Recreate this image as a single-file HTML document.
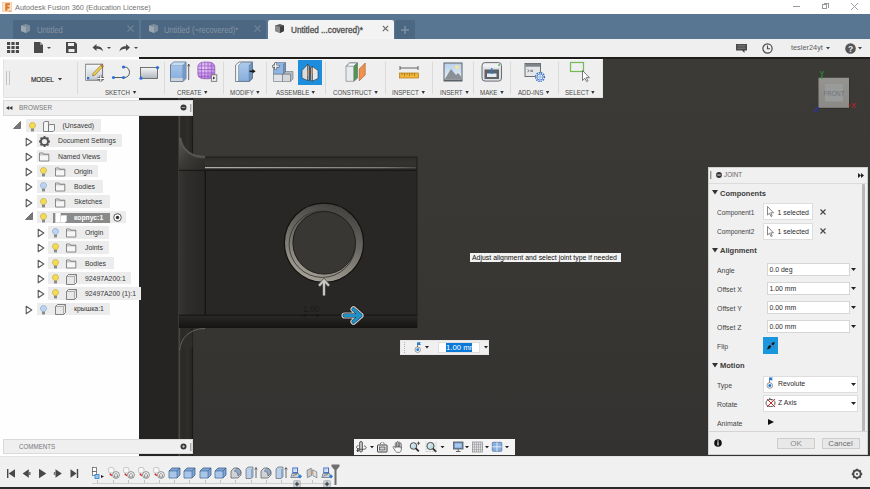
<!DOCTYPE html>
<html><head><meta charset="utf-8">
<style>
*{margin:0;padding:0;box-sizing:border-box}
html,body{width:870px;height:489px;overflow:hidden;background:#3c3a37;font-family:"Liberation Sans",sans-serif;}
.a{position:absolute}
.t{position:absolute;white-space:nowrap;line-height:1}
#title{left:0;top:0;width:870px;height:14px;background:#fff}
#tabs{left:0;top:14px;width:870px;height:25px;background:#587592}
#qat{left:0;top:39px;width:870px;height:18px;background:#efefef}
#vp{left:139px;top:57px;width:731px;height:399px;background:linear-gradient(#3c3a37,#393734 50%,#343230);border-top:2px solid #201e1b}
#leftp{left:0;top:57px;width:139px;height:399px;background:#fefefe}
#ribbon{left:3px;top:59px;width:600px;height:38.5px;background:#efefef;border:1px solid #e2e2e2;border-top-color:#f8f8f8}
#browserh{left:2.5px;top:100px;width:190px;height:16px;background:#efefef;border:1px solid #dadada}
#comments{left:2.5px;top:439px;width:190px;height:15px;background:#efefef;border:1px solid #dadada}
#timeline{left:0;top:456px;width:870px;height:31px;background:#f0f0f0;border-top:1px solid #e4e4e4}
#tlbottom{left:0;top:487px;width:870px;height:2px;background:#2a2a2a}
#dialog{left:708px;top:167px;width:160px;height:288px;background:#f0f0f0;border:1px solid #cfcfcf}
.rl{font-size:7.3px;color:#4a4a4a;transform:scaleX(0.845);transform-origin:0 0}
.rl::after{content:"";display:inline-block;margin-left:3px;border-left:2.3px solid transparent;border-right:2.3px solid transparent;border-top:3px solid #333;vertical-align:1.5px}
.dh{font-size:7.5px;font-weight:bold;color:#3a3a3a;margin-top:0.6px}
.dl{font-size:7px;color:#444;transform:scaleX(0.99);transform-origin:0 0}
.dt{font-size:6.9px;color:#2a2a2a;margin-top:0.8px}
.lbl{font-size:6.6px;color:#555}
.row{position:absolute;height:12.5px;background:#ececec}
.rt{position:absolute;font-size:6.85px;color:#363636;white-space:nowrap;line-height:12px}
</style></head><body>

<!-- TITLE -->
<div id="title" class="a"></div>
<svg class="a" style="left:1.5px;top:2px" width="10" height="10" viewBox="0 0 10 10"><rect x="0" y="0" width="10" height="10" fill="#fbe3cc"/><rect x="0.6" y="0.6" width="8.8" height="8.8" fill="none" stroke="#f6c9a0" stroke-width="0.6"/><path d="M3.3 1.2H8V3.3H5.4V4.6H7.6V6.6H5.4V8.8H3.3Z" fill="#dc7426"/><rect x="6.5" y="8.5" width="2.8" height="1.2" fill="#f0a060"/></svg>
<div class="t" style="left:15px;top:4px;font-size:7.8px;color:#727272;transform:scaleX(0.94);transform-origin:0 0">Autodesk Fusion 360 (Education License)</div>
<div class="a" style="left:793px;top:6px;width:7px;height:1px;background:#999"></div>
<div class="a" style="left:822px;top:4px;width:5px;height:5px;border:1px solid #999"></div>
<div class="a" style="left:823.5px;top:2.5px;width:5px;height:5px;border-top:1px solid #999;border-right:1px solid #999"></div>
<svg class="a" style="left:850px;top:2px" width="9" height="9" viewBox="0 0 9 9"><path d="M1 1L8 8M8 1L1 8" stroke="#999" stroke-width="0.9"/></svg>
<!-- TABS -->
<div id="tabs" class="a"></div>
<div class="a" style="left:13px;top:20px;width:126px;height:19px;background:#4c6782;border-radius:2px 2px 0 0"></div>
<div class="a" style="left:141px;top:20px;width:125px;height:19px;background:#4c6782;border-radius:2px 2px 0 0"></div>
<div class="a" style="left:268px;top:20px;width:126px;height:19px;background:#f3f3f3;border-radius:2px 2px 0 0"></div>
<div class="a" style="left:395px;top:20px;width:20px;height:19px;background:#4c6782;border-radius:2px 2px 0 0"></div>
<svg class="a" style="left:20px;top:23px" width="11" height="11" viewBox="0 0 11 11"><path d="M1 2.5L6 1L10 2.5V8L6 10L1 8Z" fill="#7f8e9c"/><path d="M1 2.5L6 4V10L1 8Z" fill="#9aa6b1"/></svg>
<div class="t" style="left:37px;top:25.8px;font-size:8.4px;color:#8594a3;transform:scaleX(0.91);transform-origin:0 0">Untitled</div>
<svg class="a" style="left:127px;top:25px" width="7" height="7" viewBox="0 0 7 7"><path d="M0.5 0.5L6.5 6.5M6.5 0.5L0.5 6.5" stroke="#6f8296" stroke-width="1.1"/></svg>
<svg class="a" style="left:148px;top:23px" width="11" height="11" viewBox="0 0 11 11"><path d="M1 2.5L6 1L10 2.5V8L6 10L1 8Z" fill="#7f8e9c"/><path d="M1 2.5L6 4V10L1 8Z" fill="#9aa6b1"/></svg>
<div class="t" style="left:164px;top:25.8px;font-size:8.4px;color:#8594a3;transform:scaleX(0.91);transform-origin:0 0">Untitled (~recovered)*</div>
<svg class="a" style="left:254px;top:25px" width="7" height="7" viewBox="0 0 7 7"><path d="M0.5 0.5L6.5 6.5M6.5 0.5L0.5 6.5" stroke="#6f8296" stroke-width="1.1"/></svg>
<svg class="a" style="left:274px;top:23px" width="11" height="11" viewBox="0 0 11 11"><path d="M1 2.5L6 1L10 2.5V8L6 10L1 8Z" fill="#5a5a5a"/><path d="M1 2.5L6 4V10L1 8Z" fill="#8c8c8c"/><path d="M6 4L10 2.5V8L6 10Z" fill="#3e3e3e"/></svg>
<div class="t" style="left:291px;top:27px;font-size:8.2px;color:#4e4e4e;-webkit-text-stroke:0.3px #4e4e4e">Untitled ...covered)*</div>
<svg class="a" style="left:382px;top:25px" width="7" height="7" viewBox="0 0 7 7"><path d="M0.8 0.8L6.2 6.2M6.2 0.8L0.8 6.2" stroke="#6a6a6a" stroke-width="1.2"/></svg>
<svg class="a" style="left:400px;top:25px" width="10" height="10" viewBox="0 0 10 10"><path d="M5 1V9M1 5H9" stroke="#7f93a7" stroke-width="1.4"/></svg>
<!-- QAT -->
<div id="qat" class="a"></div>
<svg class="a" style="left:7px;top:42px" width="12" height="11" viewBox="0 0 12 11"><g fill="#4a4a4a"><rect x="0" y="0" width="3.2" height="3" /><rect x="4.4" y="0" width="3.2" height="3"/><rect x="8.8" y="0" width="3.2" height="3"/><rect x="0" y="4" width="3.2" height="3" /><rect x="4.4" y="4" width="3.2" height="3"/><rect x="8.8" y="4" width="3.2" height="3"/><rect x="0" y="8" width="3.2" height="3" /><rect x="4.4" y="8" width="3.2" height="3"/><rect x="8.8" y="8" width="3.2" height="3"/></g></svg>
<svg class="a" style="left:34px;top:42px" width="18" height="11" viewBox="0 0 18 11"><path d="M0 0H6L9 3V11H0Z" fill="#4a4a4a"/><path d="M6 0V3H9" fill="#9a9a9a"/><path d="M13 5H17L15 7Z" fill="#4a4a4a"/></svg>
<svg class="a" style="left:66px;top:42px" width="11" height="11" viewBox="0 0 11 11"><path d="M0 0H9L11 2V11H0Z" fill="#4a4a4a"/><rect x="2" y="1" width="6" height="3" fill="#efefef"/><rect x="2.5" y="7" width="6" height="3" fill="#efefef"/></svg>
<svg class="a" style="left:92px;top:43px" width="20" height="10" viewBox="0 0 20 10"><path d="M4.5 1L0.5 4.5L4.5 8V5.8C7.5 5.6 9.5 6.5 11 8.5C10.5 5 8.5 3.2 4.5 3.2Z" fill="#4a4a4a"/><path d="M15 4H19L17 6Z" fill="#4a4a4a"/></svg>
<svg class="a" style="left:119px;top:43px" width="20" height="10" viewBox="0 0 20 10"><path d="M7 1L11 4.5L7 8V5.8C4 5.6 2 6.5 0.5 8.5C1 5 3 3.2 7 3.2Z" fill="#4a4a4a"/><path d="M15 4H19L17 6Z" fill="#4a4a4a"/></svg>
<svg class="a" style="left:736px;top:44px" width="11" height="9" viewBox="0 0 11 9"><path d="M0 0H11V6.5H8.5V9L6 6.5H0Z" fill="#4a4a4a"/><path d="M1.5 1.5H9.5M1.5 3H9.5M1.5 4.5H9.5" stroke="#888" stroke-width="0.6"/></svg>
<svg class="a" style="left:762px;top:43px" width="11" height="11" viewBox="0 0 11 11"><circle cx="5.5" cy="5.5" r="4.6" fill="none" stroke="#4a4a4a" stroke-width="1.2"/><path d="M5.5 2.6V5.8H8" fill="none" stroke="#4a4a4a" stroke-width="1.1"/></svg>
<div class="t" style="left:791px;top:44px;font-size:7.35px;color:#606060">tesler24yt</div>
<svg class="a" style="left:826px;top:47px" width="4" height="3" viewBox="0 0 4 3"><path d="M0 0H4L2 2.5Z" fill="#444"/></svg>
<svg class="a" style="left:845px;top:43px" width="11" height="11" viewBox="0 0 11 11"><circle cx="5.5" cy="5.5" r="5.3" fill="#555"/><text x="5.5" y="8.6" font-family="Liberation Sans" font-weight="bold" font-size="8.5" fill="#efefef" text-anchor="middle">?</text></svg>
<svg class="a" style="left:858px;top:47px" width="4" height="3" viewBox="0 0 4 3"><path d="M0 0H4L2 2.5Z" fill="#444"/></svg>

<div id="vp" class="a"></div>
<!-- MODEL -->
<svg class="a" style="left:139px;top:59px" width="300" height="397" viewBox="139 59 300 397">
<defs>
<linearGradient id="tube2" x1="0" y1="0" x2="1" y2="0"><stop offset="0" stop-color="#363532"/><stop offset="0.3" stop-color="#2e2d2b"/><stop offset="1" stop-color="#282725"/></linearGradient>
<linearGradient id="tube" x1="0" y1="0" x2="1" y2="0"><stop offset="0" stop-color="#32312e"/><stop offset="0.3" stop-color="#2a2927"/><stop offset="0.65" stop-color="#2f2e2b"/><stop offset="1" stop-color="#252422"/></linearGradient>
<linearGradient id="topband" x1="0" y1="0" x2="0" y2="1"><stop offset="0" stop-color="#2e2d2a"/><stop offset="0.5" stop-color="#34332f"/><stop offset="1" stop-color="#2a2927"/></linearGradient>
<linearGradient id="botband" x1="0" y1="0" x2="0" y2="1"><stop offset="0" stop-color="#2b2a28"/><stop offset="0.6" stop-color="#1d1c1a"/><stop offset="1" stop-color="#151412"/></linearGradient>
<linearGradient id="fil1" x1="0" y1="0" x2="1" y2="1"><stop offset="0" stop-color="#5a5954"/><stop offset="0.5" stop-color="#3a3936"/><stop offset="1" stop-color="#2a2927"/></linearGradient>
<linearGradient id="hl" gradientUnits="userSpaceOnUse" x1="205" y1="0" x2="417" y2="0"><stop offset="0" stop-color="#b0b0ac"/><stop offset="0.85" stop-color="#7a7a76"/><stop offset="1" stop-color="#4a4a46"/></linearGradient>
<linearGradient id="ring" x1="0.3" y1="1" x2="0.65" y2="0"><stop offset="0" stop-color="#a29e94"/><stop offset="0.35" stop-color="#807d76"/><stop offset="0.7" stop-color="#5e5c57"/><stop offset="1" stop-color="#464542"/></linearGradient>
</defs>
<rect x="139" y="59" width="40" height="397" fill="#252422"/>
<rect x="179" y="59" width="13.5" height="397" fill="url(#tube)"/>
<path d="M179.1 59V456" stroke="#62615c" stroke-width="0.8"/>
<path d="M192.6 59V157M192.6 328V456" stroke="#1a1917" stroke-width="1"/>
<!-- top fillet -->
<path d="M179 137C181 150 190.5 157 205 157V170H179Z" fill="url(#fil1)"/>
<!-- body -->
<rect x="205" y="157" width="212" height="13" fill="url(#topband)"/>
<rect x="179" y="170" width="238" height="158" fill="#282725"/>
<rect x="179" y="170" width="26" height="145" fill="url(#tube2)"/>
<path d="M205 157H417V328" fill="none" stroke="#1c1b19" stroke-width="0.8"/>
<path d="M205 167.6H416" stroke="url(#hl)" stroke-width="1.3"/>
<path d="M179 170.3H417" stroke="#161513" stroke-width="1"/>
<path d="M205.3 170V328" stroke="#151412" stroke-width="1.3"/>
<rect x="179" y="315" width="238" height="13" fill="url(#botband)"/>
<path d="M179 315.2H417" stroke="#141311" stroke-width="1"/>
<!-- bottom fillet -->
<path d="M179 348C181 336 190.5 328 205 328H192.5V348Z" fill="#2e2d2a"/>
<path d="M179.5 350C181 337 190.5 328.5 205 328.5" fill="none" stroke="#6a6964" stroke-width="0.9"/>
<path d="M180.5 138C182 149.5 191 157.5 205 157.5" fill="none" stroke="#55544f" stroke-width="2.2" opacity="0.8"/><path d="M179.5 137C181 149 190.5 156.5 205 156.5" fill="none" stroke="#65645f" stroke-width="0.8"/><path d="M192.5 59V137" stroke="#1e1d1b" stroke-width="1"/>
<!-- ring -->
<circle cx="324" cy="242.8" r="35.4" fill="none" stroke="url(#ring)" stroke-width="8.2"/>
<circle cx="324" cy="242.8" r="39.6" fill="none" stroke="#131211" stroke-width="1.2"/>
<circle cx="322.3" cy="244.2" r="33.2" fill="none" stroke="#2e2d2a" stroke-width="0.8"/>
<circle cx="324.2" cy="242.9" r="31.3" fill="#393734" stroke="#1e1d1b" stroke-width="0.8"/>
<!-- arrow up -->
<path d="M324 295.5V281M319 285.8L324 280.3L329 285.8" fill="none" stroke="#4a4a48" stroke-width="3.4"/>
<path d="M324 295.5V281M319 285.8L324 280.3L329 285.8" fill="none" stroke="#c6c6c4" stroke-width="2.1"/>
<!-- dimension -->
<text x="303" y="311.8" font-family="Liberation Sans" font-size="9.4" fill="#1a1a19" transform="translate(303 0) scale(0.88 1) translate(-303 0)">1.00</text>
<path d="M302 315.4L305.5 314.2V316.6ZM320 315.4L316.5 314.2V316.6Z" fill="#111"/>
<!-- blue arrow -->
<g fill="none" stroke-linecap="round" stroke-linejoin="round">
<path d="M344.5 315.5H360.5M353.5 309.3L360.5 315.5L353.5 321.7" stroke="#1c1c1c" stroke-width="7.6"/>
<path d="M344.5 315.5H360.5M353.5 309.3L360.5 315.5L353.5 321.7" stroke="#c6cacd" stroke-width="6.2"/>
<path d="M344.5 315.5H360.5M353.5 309.3L360.5 315.5L353.5 321.7" stroke="#20232a" stroke-width="3.8"/>
<path d="M344.5 315.5H360.5M353.5 309.3L360.5 315.5L353.5 321.7" stroke="#1e90c8" stroke-width="3.1"/>
</g>
</svg>
<div id="leftp" class="a"></div>
<div id="ribbon" class="a"></div>
<div class="a" style="left:6px;top:71px;width:1px;height:14px;background:#c4c4c4"></div>
<div class="a" style="left:9px;top:71px;width:1px;height:14px;background:#c4c4c4"></div>
<div class="t" style="left:30.8px;top:75.6px;font-size:7.4px;color:#333;-webkit-text-stroke:0.2px #333;transform:scaleX(0.87);transform-origin:0 0">MODEL</div>
<svg class="a" style="left:58px;top:77.5px" width="4" height="3" viewBox="0 0 4 3"><path d="M0 0H4L2 2.5Z" fill="#333"/></svg>
<div class="a" style="left:77px;top:62px;width:1px;height:32px;background:#dadada"></div>
<div class="a" style="left:164px;top:62px;width:1px;height:32px;background:#dadada"></div>
<div class="a" style="left:223px;top:62px;width:1px;height:32px;background:#dadada"></div>
<div class="a" style="left:266px;top:62px;width:1px;height:32px;background:#dadada"></div>
<div class="a" style="left:325px;top:62px;width:1px;height:32px;background:#dadada"></div>
<div class="a" style="left:385px;top:62px;width:1px;height:32px;background:#dadada"></div>
<div class="a" style="left:432px;top:62px;width:1px;height:32px;background:#dadada"></div>
<div class="a" style="left:473px;top:62px;width:1px;height:32px;background:#dadada"></div>
<div class="a" style="left:510px;top:62px;width:1px;height:32px;background:#dadada"></div>
<div class="a" style="left:558px;top:62px;width:1px;height:32px;background:#dadada"></div>
<div class="t rl" style="left:105px;top:89px">SKETCH</div>
<div class="t rl" style="left:177px;top:89px">CREATE</div>
<div class="t rl" style="left:230px;top:89px">MODIFY</div>
<div class="t rl" style="left:276px;top:89px">ASSEMBLE</div>
<div class="t rl" style="left:333px;top:89px">CONSTRUCT</div>
<div class="t rl" style="left:392px;top:89px">INSPECT</div>
<div class="t rl" style="left:440px;top:89px">INSERT</div>
<div class="t rl" style="left:480px;top:89px">MAKE</div>
<div class="t rl" style="left:518px;top:89px">ADD-INS</div>
<div class="t rl" style="left:565px;top:89px">SELECT</div>
<!-- sketch icon -->
<svg class="a" style="left:84px;top:62px" width="22" height="21" viewBox="84 62 22 21"><defs><linearGradient id="gsk" x1="0" y1="0" x2="0" y2="1"><stop offset="0" stop-color="#f8fafc"/><stop offset="1" stop-color="#c4cad2"/></linearGradient></defs><rect x="85.8" y="64.2" width="16.8" height="16" fill="url(#gsk)" stroke="#6a6a6a" stroke-width="0.9"/><path d="M86.5 65V80" stroke="#fff" stroke-width="0.6"/><rect x="87" y="77" width="2.2" height="2.2" fill="#2b6fd6"/><path d="M93 73.5L100.8 65.3L102.6 67L94.8 75.2L92.6 75.8Z" fill="#f4cf48" stroke="#6f5a20" stroke-width="0.55"/><path d="M100.8 65.3L101.8 64.3L103.6 66L102.6 67Z" fill="#e07a50" stroke="#6f5a20" stroke-width="0.5"/><path d="M97.5 78.5H104M100.8 75.3V81.7" stroke="#555" stroke-width="2.4"/><path d="M97.5 78.5H104M100.8 75.3V81.7" stroke="#fff" stroke-width="1.2"/></svg>
<svg class="a" style="left:110px;top:64px" width="22" height="16" viewBox="110 64 22 16"><path d="M113.5 77.5H123.5M123.5 67H124.5C127.5 67 129.5 69.3 129.5 72.2C129.5 75.2 127.5 77.5 124.5 77.5H123.5" fill="none" stroke="#5a5a5a" stroke-width="1"/><circle cx="113.5" cy="77.5" r="1.6" fill="#2b6fd6"/><circle cx="123.5" cy="77.5" r="1.6" fill="#2b6fd6"/><circle cx="123.5" cy="67" r="1.6" fill="#2b6fd6"/></svg>
<svg class="a" style="left:138px;top:64px" width="22" height="17" viewBox="138 64 22 17"><defs><linearGradient id="grc" x1="0" y1="0" x2="0" y2="1"><stop offset="0" stop-color="#f4f6f8"/><stop offset="1" stop-color="#b0b6be"/></linearGradient></defs><rect x="140.5" y="67.5" width="17" height="11" fill="url(#grc)" stroke="#666" stroke-width="0.9"/><circle cx="141" cy="78.2" r="1.6" fill="#2b6fd6"/><circle cx="157.5" cy="67.6" r="1.6" fill="#2b6fd6"/></svg>
<!-- create -->
<svg class="a" style="left:168px;top:60px" width="24" height="24" viewBox="168 60 24 24"><defs><linearGradient id="gbx" x1="0" y1="0" x2="0" y2="1"><stop offset="0" stop-color="#aac8ec"/><stop offset="1" stop-color="#84acdc"/></linearGradient></defs><path d="M170.5 65L173.5 62H186V78.5L183 81.5H170.5Z" fill="url(#gbx)" stroke="#5b6a7a" stroke-width="0.8"/><path d="M170.5 65H183L186 62M183 65V81.5" fill="none" stroke="#5b6a7a" stroke-width="0.6"/><path d="M183.3 65.3L185.7 62.6V78.3L183.3 81.1Z" fill="#6f98cc"/><path d="M171 65.3H182.6L185.3 62.5H173.7Z" fill="#c4dcf4"/><rect x="170.9" y="78" width="11.8" height="3.1" fill="#cdd2da"/><path d="M188.7 80V64.5M187.6 66.3L188.7 64L189.8 66.3" stroke="#444" stroke-width="0.8" fill="none"/></svg>
<svg class="a" style="left:197px;top:61px" width="21" height="22" viewBox="197 61 21 22"><defs><radialGradient id="gpp" cx="0.4" cy="0.35" r="0.8"><stop offset="0" stop-color="#eed6fa"/><stop offset="1" stop-color="#b070dc"/></radialGradient></defs><path d="M197.8 68C197.8 63.5 200 62 206.3 62C212.6 62 214.8 63.5 214.8 68V73C214.8 77.5 212.6 78.8 206.3 78.8C200 78.8 197.8 77.5 197.8 73Z" fill="url(#gpp)" stroke="#7a4aa0" stroke-width="0.6"/><g stroke="#8c48c0" stroke-width="0.6" fill="none"><path d="M198 66H214.6M198 69.5H214.6M198 73H214.6M198 76.3H214.6"/><path d="M201.5 62.3V78.6M204.8 62V78.8M208 62V78.8M211.3 62.3V78.6"/></g><rect x="211.3" y="74.8" width="5.5" height="6.5" fill="#eee" stroke="#666" stroke-width="0.8"/><path d="M213 76.5L215.3 78L213 79.5Z" fill="#333"/></svg>
<!-- modify -->
<svg class="a" style="left:234px;top:60px" width="23" height="24" viewBox="234 60 23 24"><defs><linearGradient id="gmd" x1="0" y1="0" x2="0" y2="1"><stop offset="0" stop-color="#aecbec"/><stop offset="1" stop-color="#86aedc"/></linearGradient></defs><path d="M235.6 65L239 62H252.5V78.5L249.3 81.5H235.6Z" fill="#f4f6f8" stroke="#5b6a7a" stroke-width="0.8"/><path d="M238.6 65.2L241.6 62.3H252.3V78.3L249.2 81.3H238.6Z" fill="url(#gmd)" stroke="#5b6a7a" stroke-width="0.5"/><path d="M249.2 65.2L252.3 62.3V78.3L249.2 81.3Z" fill="#6d96ca" stroke="#5b6a7a" stroke-width="0.5"/><path d="M249.5 71.3H253" stroke="#1a1a1a" stroke-width="1.6"/><path d="M252.5 69L255.6 71.3L252.5 73.6Z" fill="#1a1a1a"/></svg>
<!-- assemble -->
<svg class="a" style="left:270px;top:60px" width="25" height="24" viewBox="270 60 25 24"><g stroke="#6a737c" stroke-width="0.6"><path d="M273.5 74H282.5V81.5H273.5Z" fill="#dfe2e6"/><path d="M282.5 74H290.5V81.5H282.5Z" fill="#d4d8dc"/><path d="M282.5 74L285 71.5H293V79L290.5 81.5V74Z" fill="#b4bac2"/><path d="M273.5 64.5L275.5 62.5H285.5V71.5L283.5 74H273.5Z" fill="#8db4e4"/><path d="M283.5 64.5L285.5 62.5V71.5L283.5 74Z" fill="#6d94c4"/></g><path d="M272 66.2H279.5M275.75 62.5V70" stroke="#555" stroke-width="2.6"/><path d="M272.5 66.2H279M275.75 63V69.5" stroke="#fff" stroke-width="1.3"/></svg>
<div class="a" style="left:298px;top:60px;width:24px;height:25px;background:#1e8ddb"></div>
<svg class="a" style="left:298px;top:60px" width="24" height="25" viewBox="298 60 24 25"><g stroke="#2a3440" stroke-width="0.6"><path d="M302 70.5L307.5 64.5L309.5 66V80L307.5 80.5L302 78Z" fill="#d9dde2"/><path d="M307.5 64.5L309.5 66V80L307.5 80.5Z" fill="#9aa2ac"/><path d="M318 70.5L312.5 66.5L310.5 68V80.5L312.5 81L318 78.5Z" fill="#e6e9ec"/><path d="M312.5 66.5L310.5 68V80.5L312.5 81Z" fill="#a8b0b8"/></g><path d="M308 71V76M312 68.5V73.5" stroke="#f08a30" stroke-width="1"/></svg>
<!-- construct -->
<svg class="a" style="left:344px;top:61px" width="23" height="22" viewBox="344 61 23 22"><g stroke="#6a737c" stroke-width="0.6"><path d="M346 66L349.5 62.8H357.5V78L354 81.3H346Z" fill="#e8eaec"/><path d="M346.4 66.2H353.8L357.2 63H349.6Z" fill="#f6f7f8"/><path d="M353.8 66.2L357.3 63V78L353.8 81.1Z" fill="#4c9a48"/></g><path d="M359.2 80.8V69L365.2 63V75Z" fill="#f0924e" stroke="#a05a28" stroke-width="0.6"/></svg>
<!-- inspect -->
<svg class="a" style="left:399px;top:66px" width="20" height="13" viewBox="0 0 20 13"><path d="M1 2H19M1 0V4M19 0V4" stroke="#555" stroke-width="0.9"/><rect x="0.5" y="7" width="19" height="5" fill="#f1b53c" stroke="#b07b12" stroke-width="0.7"/><path d="M3 7V9M5.5 7V10M8 7V9M10.5 7V10M13 7V9M15.5 7V10" stroke="#8a5c10" stroke-width="0.6"/></svg>
<!-- insert -->
<svg class="a" style="left:443px;top:62px" width="20" height="20" viewBox="0 0 20 20"><defs><linearGradient id="gin" x1="0" y1="0" x2="0" y2="1"><stop offset="0" stop-color="#b9d2ea"/><stop offset="1" stop-color="#e8eef4"/></linearGradient></defs><rect x="0.5" y="0.5" width="19" height="19" fill="#5a6068"/><rect x="1.5" y="1.5" width="17" height="16" fill="url(#gin)"/><circle cx="14" cy="5" r="2" fill="#f6e59a"/><path d="M1.5 17.5L8 7L13 13L15 11L18.5 15V17.5Z" fill="#8a9096"/></svg>
<!-- make -->
<svg class="a" style="left:481px;top:61px" width="22" height="22" viewBox="481 61 22 22"><rect x="482" y="62.6" width="19.5" height="18.5" rx="3" fill="#dfe2e5" stroke="#5b5f63" stroke-width="0.9"/><rect x="483" y="63.6" width="17.5" height="4" rx="2" fill="#eef0f2"/><rect x="484.5" y="69.5" width="14.5" height="9.5" fill="#5e6368"/><rect x="487" y="73.5" width="9.5" height="3.5" fill="#e8edf2"/><path d="M491.8 68V73.5" stroke="#1e7fd0" stroke-width="1.3"/><path d="M490.2 72.2L491.8 74.2L493.4 72.2Z" fill="#1e7fd0"/><rect x="498.3" y="64.3" width="1.6" height="1.6" fill="#3ab04a"/></svg>
<!-- add-ins -->
<svg class="a" style="left:524px;top:62px" width="22" height="21" viewBox="524 62 22 21"><rect x="525" y="63.5" width="15.5" height="13" fill="#e4e6e8" stroke="#5f6469" stroke-width="0.9"/><rect x="525.4" y="63.9" width="14.7" height="2.8" fill="#7d8288"/><path d="M527.5 69.5L529.3 70.7L527.5 71.9M530.5 70.3H533M530.5 71.4H533" stroke="#444" stroke-width="0.6" fill="none"/><circle cx="540" cy="77" r="4.3" fill="#fff" stroke="#3a72c4" stroke-width="1.6" stroke-dasharray="1.4 0.9"/><circle cx="540" cy="77" r="3" fill="#f4f6fa" stroke="#3a72c4" stroke-width="0.8"/><circle cx="540" cy="77" r="1.2" fill="#fff" stroke="#3a72c4" stroke-width="0.6"/></svg>
<!-- select -->
<svg class="a" style="left:569px;top:61px" width="22" height="22" viewBox="569 61 22 22"><rect x="570.5" y="62.5" width="13" height="9" fill="none" stroke="#72bc58" stroke-width="1.2"/><path d="M582.5 70.5V80.5L584.8 78.3L586.7 81.6L588 80.8L586.2 77.6H589.4Z" fill="#fff" stroke="#444" stroke-width="0.7"/></svg>
<div id="browserh" class="a"></div>
<svg class="a" style="left:5.8px;top:106px" width="7" height="4" viewBox="0 0 7 4"><path d="M3.2 0V4L0 2ZM6.4 0V4L3.2 2Z" fill="#333"/></svg>
<div class="t" style="left:18.5px;top:104.5px;font-size:6.9px;color:#777;transform:scaleX(0.93);transform-origin:0 0">BROWSER</div>
<svg class="a" style="left:179.5px;top:104.3px" width="7" height="7" viewBox="0 0 7 7"><circle cx="3.5" cy="3.5" r="3" fill="#3a3a3a"/><path d="M1.8 3.5H5.2" stroke="#bbb" stroke-width="0.8"/></svg>
<div class="a" style="left:190px;top:104px;width:2px;height:7.5px;background:#d0d0d0;border-left:1px solid #aaa"></div>
<div class="row" style="left:25.7px;top:119.4px;width:75.3px"></div>
<svg class="a" style="left:13px;top:121.0px" width="8" height="8" viewBox="0 0 8 8"><path d="M7.5 0.5V7.5H0.5Z" fill="#777" stroke="#444" stroke-width="0.6"/></svg>
<svg class="a" style="left:29px;top:121.5px" width="7" height="10" viewBox="0 0 7 10"><path d="M3.5 0.5C5.3 0.5 6.5 1.8 6.5 3.5C6.5 4.9 5.4 5.6 5 6.5H2C1.6 5.6 0.5 4.9 0.5 3.5C0.5 1.8 1.7 0.5 3.5 0.5Z" fill="#f4dc52" stroke="#b09020" stroke-width="0.5"/><rect x="2" y="6.8" width="3" height="2.6" fill="#8a8a8a"/></svg>
<svg class="a" style="left:43px;top:121.0px" width="12" height="11" viewBox="0 0 12 11"><path d="M0.5 1.5L2 0.5H5.5V10.5H0.5Z" fill="#f4f4f4" stroke="#666" stroke-width="0.8"/><path d="M5.5 4.5L7 3.5H11.5V9L10 10.5H5.5Z" fill="#f4f4f4" stroke="#666" stroke-width="0.8"/></svg>
<div class="rt" style="left:62.5px;top:120.3px">(Unsaved)</div>
<div class="row" style="left:37.0px;top:134.4px;width:85.0px"></div>
<svg class="a" style="left:25px;top:136.5px" width="8" height="10" viewBox="0 0 8 10"><path d="M1.2 1.2L6.8 5L1.2 8.8Z" fill="#fdfdfd" stroke="#5a5a5a" stroke-width="1.1" stroke-linejoin="round"/></svg>
<svg class="a" style="left:39px;top:136.0px" width="11" height="11" viewBox="0 0 11 11"><circle cx="5.5" cy="5.5" r="3.6" fill="none" stroke="#555" stroke-width="2"/><path d="M5.5 0V11M0 5.5H11M1.6 1.6L9.4 9.4M9.4 1.6L1.6 9.4" stroke="#555" stroke-width="1.8" stroke-dasharray="2 7 2 0"/><circle cx="5.5" cy="5.5" r="1.3" fill="#ececec"/></svg>
<div class="rt" style="left:58px;top:135.3px">Document Settings</div>
<div class="row" style="left:37.0px;top:149.6px;width:70.0px"></div>
<svg class="a" style="left:25px;top:151.7px" width="8" height="10" viewBox="0 0 8 10"><path d="M1.2 1.2L6.8 5L1.2 8.8Z" fill="#fdfdfd" stroke="#5a5a5a" stroke-width="1.1" stroke-linejoin="round"/></svg>
<svg class="a" style="left:39px;top:151.7px" width="11" height="10" viewBox="0 0 11 10"><path d="M0.5 1H4L4.8 2.2H9.8V9H0.5Z" fill="#f6f6f6" stroke="#666" stroke-width="0.75"/><path d="M0.5 2.8H9.8" stroke="#777" stroke-width="0.55"/></svg>
<div class="rt" style="left:58px;top:150.5px">Named Views</div>
<div class="row" style="left:37.0px;top:164.9px;width:60.5px"></div>
<svg class="a" style="left:25px;top:167.0px" width="8" height="10" viewBox="0 0 8 10"><path d="M1.2 1.2L6.8 5L1.2 8.8Z" fill="#fdfdfd" stroke="#5a5a5a" stroke-width="1.1" stroke-linejoin="round"/></svg>
<svg class="a" style="left:40px;top:167.0px" width="7" height="10" viewBox="0 0 7 10"><path d="M3.5 0.5C5.3 0.5 6.5 1.8 6.5 3.5C6.5 4.9 5.4 5.6 5 6.5H2C1.6 5.6 0.5 4.9 0.5 3.5C0.5 1.8 1.7 0.5 3.5 0.5Z" fill="#f4dc52" stroke="#b09020" stroke-width="0.5"/><rect x="2" y="6.8" width="3" height="2.6" fill="#8a8a8a"/></svg>
<svg class="a" style="left:55px;top:167.0px" width="11" height="10" viewBox="0 0 11 10"><path d="M0.5 1H4L4.8 2.2H9.8V9H0.5Z" fill="#f6f6f6" stroke="#666" stroke-width="0.75"/><path d="M0.5 2.8H9.8" stroke="#777" stroke-width="0.55"/></svg>
<div class="rt" style="left:74px;top:165.8px">Origin</div>
<div class="row" style="left:37.0px;top:180.1px;width:65.5px"></div>
<svg class="a" style="left:25px;top:182.2px" width="8" height="10" viewBox="0 0 8 10"><path d="M1.2 1.2L6.8 5L1.2 8.8Z" fill="#fdfdfd" stroke="#5a5a5a" stroke-width="1.1" stroke-linejoin="round"/></svg>
<svg class="a" style="left:40px;top:182.2px" width="7" height="10" viewBox="0 0 7 10"><path d="M3.5 0.5C5.3 0.5 6.5 1.8 6.5 3.5C6.5 4.9 5.4 5.6 5 6.5H2C1.6 5.6 0.5 4.9 0.5 3.5C0.5 1.8 1.7 0.5 3.5 0.5Z" fill="#bcd4f2" stroke="#6f8fb8" stroke-width="0.5"/><rect x="2" y="6.8" width="3" height="2.6" fill="#8a8a8a"/></svg>
<svg class="a" style="left:55px;top:182.2px" width="11" height="10" viewBox="0 0 11 10"><path d="M0.5 1H4L4.8 2.2H9.8V9H0.5Z" fill="#f6f6f6" stroke="#666" stroke-width="0.75"/><path d="M0.5 2.8H9.8" stroke="#777" stroke-width="0.55"/></svg>
<div class="rt" style="left:74px;top:181.0px">Bodies</div>
<div class="row" style="left:37.0px;top:195.4px;width:73.0px"></div>
<svg class="a" style="left:25px;top:197.5px" width="8" height="10" viewBox="0 0 8 10"><path d="M1.2 1.2L6.8 5L1.2 8.8Z" fill="#fdfdfd" stroke="#5a5a5a" stroke-width="1.1" stroke-linejoin="round"/></svg>
<svg class="a" style="left:40px;top:197.5px" width="7" height="10" viewBox="0 0 7 10"><path d="M3.5 0.5C5.3 0.5 6.5 1.8 6.5 3.5C6.5 4.9 5.4 5.6 5 6.5H2C1.6 5.6 0.5 4.9 0.5 3.5C0.5 1.8 1.7 0.5 3.5 0.5Z" fill="#f4dc52" stroke="#b09020" stroke-width="0.5"/><rect x="2" y="6.8" width="3" height="2.6" fill="#8a8a8a"/></svg>
<svg class="a" style="left:55px;top:197.5px" width="11" height="10" viewBox="0 0 11 10"><path d="M0.5 1H4L4.8 2.2H9.8V9H0.5Z" fill="#f6f6f6" stroke="#666" stroke-width="0.75"/><path d="M0.5 2.8H9.8" stroke="#777" stroke-width="0.55"/></svg>
<div class="rt" style="left:74px;top:196.3px">Sketches</div>
<div class="row" style="left:37.0px;top:210.7px;width:89.0px"></div>
<svg class="a" style="left:25px;top:212.3px" width="8" height="8" viewBox="0 0 8 8"><path d="M7.5 0.5V7.5H0.5Z" fill="#777" stroke="#444" stroke-width="0.6"/></svg>
<svg class="a" style="left:40px;top:212.8px" width="7" height="10" viewBox="0 0 7 10"><path d="M3.5 0.5C5.3 0.5 6.5 1.8 6.5 3.5C6.5 4.9 5.4 5.6 5 6.5H2C1.6 5.6 0.5 4.9 0.5 3.5C0.5 1.8 1.7 0.5 3.5 0.5Z" fill="#f4dc52" stroke="#b09020" stroke-width="0.5"/><rect x="2" y="6.8" width="3" height="2.6" fill="#8a8a8a"/></svg>
<div class="a" style="left:52.8px;top:213.2px;width:57.2px;height:10px;background:#8a8a8a"></div>
<svg class="a" style="left:55px;top:212.3px" width="12" height="11" viewBox="0 0 12 11"><path d="M0.5 1.5L2 0.5H5.5V10.5H0.5Z" fill="#fff" stroke="#ddd" stroke-width="0.8"/><path d="M5.5 4.5L7 3.5H11.5V9L10 10.5H5.5Z" fill="#fff" stroke="#ddd" stroke-width="0.8"/></svg>
<div class="rt" style="left:74px;top:211.6px;color:#fff;font-weight:bold;font-size:6.8px">корпус:1</div>
<svg class="a" style="left:113px;top:213.3px" width="9" height="9" viewBox="0 0 9 9"><circle cx="4.5" cy="4.5" r="3.8" fill="#fff" stroke="#444" stroke-width="0.9"/><circle cx="4.5" cy="4.5" r="1.7" fill="#333"/></svg>
<div class="row" style="left:48.3px;top:226.0px;width:60.7px"></div>
<svg class="a" style="left:36.5px;top:228.1px" width="8" height="10" viewBox="0 0 8 10"><path d="M1.2 1.2L6.8 5L1.2 8.8Z" fill="#fdfdfd" stroke="#5a5a5a" stroke-width="1.1" stroke-linejoin="round"/></svg>
<svg class="a" style="left:52px;top:228.1px" width="7" height="10" viewBox="0 0 7 10"><path d="M3.5 0.5C5.3 0.5 6.5 1.8 6.5 3.5C6.5 4.9 5.4 5.6 5 6.5H2C1.6 5.6 0.5 4.9 0.5 3.5C0.5 1.8 1.7 0.5 3.5 0.5Z" fill="#bcd4f2" stroke="#6f8fb8" stroke-width="0.5"/><rect x="2" y="6.8" width="3" height="2.6" fill="#8a8a8a"/></svg>
<svg class="a" style="left:66px;top:228.1px" width="11" height="10" viewBox="0 0 11 10"><path d="M0.5 1H4L4.8 2.2H9.8V9H0.5Z" fill="#f6f6f6" stroke="#666" stroke-width="0.75"/><path d="M0.5 2.8H9.8" stroke="#777" stroke-width="0.55"/></svg>
<div class="rt" style="left:85px;top:226.9px">Origin</div>
<div class="row" style="left:48.3px;top:241.3px;width:60.7px"></div>
<svg class="a" style="left:36.5px;top:243.4px" width="8" height="10" viewBox="0 0 8 10"><path d="M1.2 1.2L6.8 5L1.2 8.8Z" fill="#fdfdfd" stroke="#5a5a5a" stroke-width="1.1" stroke-linejoin="round"/></svg>
<svg class="a" style="left:52px;top:243.4px" width="7" height="10" viewBox="0 0 7 10"><path d="M3.5 0.5C5.3 0.5 6.5 1.8 6.5 3.5C6.5 4.9 5.4 5.6 5 6.5H2C1.6 5.6 0.5 4.9 0.5 3.5C0.5 1.8 1.7 0.5 3.5 0.5Z" fill="#f4dc52" stroke="#b09020" stroke-width="0.5"/><rect x="2" y="6.8" width="3" height="2.6" fill="#8a8a8a"/></svg>
<svg class="a" style="left:66px;top:243.4px" width="11" height="10" viewBox="0 0 11 10"><path d="M0.5 1H4L4.8 2.2H9.8V9H0.5Z" fill="#f6f6f6" stroke="#666" stroke-width="0.75"/><path d="M0.5 2.8H9.8" stroke="#777" stroke-width="0.55"/></svg>
<div class="rt" style="left:85px;top:242.2px">Joints</div>
<div class="row" style="left:48.3px;top:256.6px;width:65.7px"></div>
<svg class="a" style="left:36.5px;top:258.7px" width="8" height="10" viewBox="0 0 8 10"><path d="M1.2 1.2L6.8 5L1.2 8.8Z" fill="#fdfdfd" stroke="#5a5a5a" stroke-width="1.1" stroke-linejoin="round"/></svg>
<svg class="a" style="left:52px;top:258.7px" width="7" height="10" viewBox="0 0 7 10"><path d="M3.5 0.5C5.3 0.5 6.5 1.8 6.5 3.5C6.5 4.9 5.4 5.6 5 6.5H2C1.6 5.6 0.5 4.9 0.5 3.5C0.5 1.8 1.7 0.5 3.5 0.5Z" fill="#f4dc52" stroke="#b09020" stroke-width="0.5"/><rect x="2" y="6.8" width="3" height="2.6" fill="#8a8a8a"/></svg>
<svg class="a" style="left:66px;top:258.7px" width="11" height="10" viewBox="0 0 11 10"><path d="M0.5 1H4L4.8 2.2H9.8V9H0.5Z" fill="#f6f6f6" stroke="#666" stroke-width="0.75"/><path d="M0.5 2.8H9.8" stroke="#777" stroke-width="0.55"/></svg>
<div class="rt" style="left:85px;top:257.5px">Bodies</div>
<div class="row" style="left:48.3px;top:271.9px;width:83.2px"></div>
<svg class="a" style="left:36.5px;top:274.0px" width="8" height="10" viewBox="0 0 8 10"><path d="M1.2 1.2L6.8 5L1.2 8.8Z" fill="#fdfdfd" stroke="#5a5a5a" stroke-width="1.1" stroke-linejoin="round"/></svg>
<svg class="a" style="left:52px;top:274.0px" width="7" height="10" viewBox="0 0 7 10"><path d="M3.5 0.5C5.3 0.5 6.5 1.8 6.5 3.5C6.5 4.9 5.4 5.6 5 6.5H2C1.6 5.6 0.5 4.9 0.5 3.5C0.5 1.8 1.7 0.5 3.5 0.5Z" fill="#f4dc52" stroke="#b09020" stroke-width="0.5"/><rect x="2" y="6.8" width="3" height="2.6" fill="#8a8a8a"/></svg>
<svg class="a" style="left:66px;top:273.5px" width="11" height="11" viewBox="0 0 11 11"><path d="M0.5 2.5L2.5 0.5H10.5V8.5L8.5 10.5H0.5Z" fill="#e8e8e8" stroke="#666" stroke-width="0.8"/><path d="M0.5 2.5H8.5V10.5M8.5 2.5L10.5 0.5" fill="none" stroke="#888" stroke-width="0.6"/></svg>
<div class="rt" style="left:85px;top:272.8px">92497A200:1</div>
<div class="row" style="left:48.3px;top:287.2px;width:92.7px"></div>
<svg class="a" style="left:36.5px;top:289.3px" width="8" height="10" viewBox="0 0 8 10"><path d="M1.2 1.2L6.8 5L1.2 8.8Z" fill="#fdfdfd" stroke="#5a5a5a" stroke-width="1.1" stroke-linejoin="round"/></svg>
<svg class="a" style="left:52px;top:289.3px" width="7" height="10" viewBox="0 0 7 10"><path d="M3.5 0.5C5.3 0.5 6.5 1.8 6.5 3.5C6.5 4.9 5.4 5.6 5 6.5H2C1.6 5.6 0.5 4.9 0.5 3.5C0.5 1.8 1.7 0.5 3.5 0.5Z" fill="#f4dc52" stroke="#b09020" stroke-width="0.5"/><rect x="2" y="6.8" width="3" height="2.6" fill="#8a8a8a"/></svg>
<svg class="a" style="left:66px;top:288.8px" width="11" height="11" viewBox="0 0 11 11"><path d="M0.5 2.5L2.5 0.5H10.5V8.5L8.5 10.5H0.5Z" fill="#e8e8e8" stroke="#666" stroke-width="0.8"/><path d="M0.5 2.5H8.5V10.5M8.5 2.5L10.5 0.5" fill="none" stroke="#888" stroke-width="0.6"/></svg>
<div class="rt" style="left:85px;top:288.1px">92497A200 (1):1</div>
<div class="row" style="left:37.0px;top:302.5px;width:73.0px"></div>
<svg class="a" style="left:25px;top:304.6px" width="8" height="10" viewBox="0 0 8 10"><path d="M1.2 1.2L6.8 5L1.2 8.8Z" fill="#fdfdfd" stroke="#5a5a5a" stroke-width="1.1" stroke-linejoin="round"/></svg>
<svg class="a" style="left:40px;top:304.6px" width="7" height="10" viewBox="0 0 7 10"><path d="M3.5 0.5C5.3 0.5 6.5 1.8 6.5 3.5C6.5 4.9 5.4 5.6 5 6.5H2C1.6 5.6 0.5 4.9 0.5 3.5C0.5 1.8 1.7 0.5 3.5 0.5Z" fill="#bcd4f2" stroke="#6f8fb8" stroke-width="0.5"/><rect x="2" y="6.8" width="3" height="2.6" fill="#8a8a8a"/></svg>
<svg class="a" style="left:55px;top:304.1px" width="11" height="11" viewBox="0 0 11 11"><path d="M0.5 2.5L2.5 0.5H10.5V8.5L8.5 10.5H0.5Z" fill="#e8e8e8" stroke="#666" stroke-width="0.8"/><path d="M0.5 2.5H8.5V10.5M8.5 2.5L10.5 0.5" fill="none" stroke="#888" stroke-width="0.6"/></svg>
<div class="rt" style="left:74px;top:303.4px">крышка:1</div>
<div id="comments" class="a"></div>
<div class="t" style="left:18.5px;top:443.5px;font-size:6.9px;color:#777;transform:scaleX(0.9);transform-origin:0 0">COMMENTS</div>
<svg class="a" style="left:179.5px;top:443.3px" width="7" height="7" viewBox="0 0 7 7"><circle cx="3.5" cy="3.5" r="3" fill="#3a3a3a"/><path d="M3.5 2L5 3.5L3.5 5L2 3.5Z" fill="#bbb"/></svg>
<div class="a" style="left:190px;top:443px;width:2px;height:7.5px;background:#d0d0d0;border-left:1px solid #aaa"></div>
<div id="timeline" class="a"></div>
<svg class="a" style="left:0px;top:468px" width="85" height="11" viewBox="0 0 85 11"><g fill="#484848"><rect x="7" y="1" width="1.4" height="9"/><path d="M15 1.3V9.7L8.6 5.5Z"/><path d="M28.8 1.3V9.7L22.6 5.5Z"/><rect x="29" y="4" width="1.6" height="3" fill="#777"/><path d="M39 0.8L46.3 5.5L39 10.2Z"/><path d="M55.5 1.3V9.7L61.8 5.5Z"/><rect x="53.8" y="4" width="1.6" height="3" fill="#777"/><path d="M70.5 1.3V9.7L76.6 5.5Z"/><rect x="76.8" y="1" width="1.4" height="9"/></g></svg>
<div class="a" style="left:92px;top:483px;width:240px;height:1px;background:#cfcfcf"></div>
<div class="a" style="left:97.1px;top:480px;width:1px;height:3px;background:#c4c4c4"></div>
<div class="a" style="left:113.2px;top:480px;width:1px;height:3px;background:#c4c4c4"></div>
<div class="a" style="left:128.4px;top:480px;width:1px;height:3px;background:#c4c4c4"></div>
<div class="a" style="left:143.5px;top:480px;width:1px;height:3px;background:#c4c4c4"></div>
<div class="a" style="left:158.9px;top:480px;width:1px;height:3px;background:#c4c4c4"></div>
<div class="a" style="left:173.7px;top:480px;width:1px;height:3px;background:#c4c4c4"></div>
<div class="a" style="left:189.2px;top:480px;width:1px;height:3px;background:#c4c4c4"></div>
<div class="a" style="left:204.5px;top:480px;width:1px;height:3px;background:#c4c4c4"></div>
<div class="a" style="left:220.0px;top:480px;width:1px;height:3px;background:#c4c4c4"></div>
<div class="a" style="left:235.0px;top:480px;width:1px;height:3px;background:#c4c4c4"></div>
<div class="a" style="left:250.5px;top:480px;width:1px;height:3px;background:#c4c4c4"></div>
<div class="a" style="left:265.5px;top:480px;width:1px;height:3px;background:#c4c4c4"></div>
<div class="a" style="left:280.5px;top:480px;width:1px;height:3px;background:#c4c4c4"></div>
<div class="a" style="left:295.9px;top:480px;width:1px;height:3px;background:#c4c4c4"></div>
<div class="a" style="left:311.7px;top:480px;width:1px;height:3px;background:#c4c4c4"></div>
<div class="a" style="left:326.5px;top:480px;width:1px;height:3px;background:#c4c4c4"></div>
<svg class="a" style="left:91.6px;top:467px" width="14" height="12" viewBox="0 0 14 12"><rect x="0.5" y="0.5" width="4" height="4" fill="#fff" stroke="#555" stroke-width="0.7"/><rect x="0.5" y="4.5" width="4" height="4" fill="#fff" stroke="#555" stroke-width="0.7"/><rect x="3" y="7.5" width="4" height="4" fill="#9cc6ee" stroke="#2a7fd0" stroke-width="0.8"/><path d="M9 8L12 9.5L9 11Z" fill="#222"/></svg>
<svg class="a" style="left:107.7px;top:467px" width="12" height="12" viewBox="0 0 12 12"><rect x="0.5" y="0.5" width="5.5" height="5.5" rx="1.8" fill="#f6f6f6" stroke="#aaa" stroke-width="0.6"/><path d="M1.8 6.8L3.8 8.8" stroke="#e02020" stroke-width="1.4"/><circle cx="8" cy="8" r="3.4" fill="#f6f6f6" stroke="#666" stroke-width="0.7"/><path d="M6.6 10V7.6L8 6.4L9.4 7.6V10Z" fill="none" stroke="#555" stroke-width="0.6"/></svg>
<svg class="a" style="left:122.9px;top:467px" width="12" height="12" viewBox="0 0 12 12"><rect x="0.5" y="0.5" width="5.5" height="5.5" rx="1.8" fill="#f6f6f6" stroke="#aaa" stroke-width="0.6"/><path d="M1.8 6.8L3.8 8.8" stroke="#e02020" stroke-width="1.4"/><circle cx="8" cy="8" r="3.4" fill="#f6f6f6" stroke="#666" stroke-width="0.7"/><path d="M6.6 10V7.6L8 6.4L9.4 7.6V10Z" fill="none" stroke="#555" stroke-width="0.6"/></svg>
<svg class="a" style="left:138.0px;top:467px" width="12" height="12" viewBox="0 0 12 12"><rect x="0.5" y="0.5" width="5.5" height="5.5" rx="1.8" fill="#f6f6f6" stroke="#aaa" stroke-width="0.6"/><path d="M1.8 6.8L3.8 8.8" stroke="#e02020" stroke-width="1.4"/><circle cx="8" cy="8" r="3.4" fill="#f6f6f6" stroke="#666" stroke-width="0.7"/><path d="M6.6 10V7.6L8 6.4L9.4 7.6V10Z" fill="none" stroke="#555" stroke-width="0.6"/></svg>
<svg class="a" style="left:153.4px;top:467px" width="12" height="12" viewBox="0 0 12 12"><rect x="0.5" y="0.5" width="5.5" height="5.5" rx="1.8" fill="#f6f6f6" stroke="#aaa" stroke-width="0.6"/><path d="M1.8 6.8L3.8 8.8" stroke="#e02020" stroke-width="1.4"/><circle cx="8" cy="8" r="3.4" fill="#f6f6f6" stroke="#666" stroke-width="0.7"/><path d="M6.6 10V7.6L8 6.4L9.4 7.6V10Z" fill="none" stroke="#555" stroke-width="0.6"/></svg>
<svg class="a" style="left:167.7px;top:467px" width="13" height="12" viewBox="0 0 13 12"><path d="M1 4L4 1H12V8L9 11H1Z" fill="#7ea6d6" stroke="#35557c" stroke-width="0.7"/><path d="M1 4H9V11M9 4L12 1" fill="none" stroke="#35557c" stroke-width="0.6"/><path d="M1.5 4.5H8.5V10.5H1.5Z" fill="#a9c6e8"/></svg>
<svg class="a" style="left:183.2px;top:467px" width="13" height="12" viewBox="0 0 13 12"><path d="M1 4L4 1H12V8L9 11H1Z" fill="#7ea6d6" stroke="#35557c" stroke-width="0.7"/><path d="M1 4H9V11M9 4L12 1" fill="none" stroke="#35557c" stroke-width="0.6"/><path d="M1.5 4.5H8.5V10.5H1.5Z" fill="#a9c6e8"/></svg>
<svg class="a" style="left:198.5px;top:467px" width="13" height="12" viewBox="0 0 13 12"><path d="M1 4L4 1H12V8L9 11H1Z" fill="#7ea6d6" stroke="#35557c" stroke-width="0.7"/><path d="M1 4H9V11M9 4L12 1" fill="none" stroke="#35557c" stroke-width="0.6"/><path d="M1.5 4.5H8.5V10.5H1.5Z" fill="#a9c6e8"/></svg>
<svg class="a" style="left:214.0px;top:467px" width="13" height="12" viewBox="0 0 13 12"><path d="M1 4L4 1H12V8L9 11H1Z" fill="#7ea6d6" stroke="#35557c" stroke-width="0.7"/><path d="M1 4H9V11M9 4L12 1" fill="none" stroke="#35557c" stroke-width="0.6"/><path d="M1.5 4.5H8.5V10.5H1.5Z" fill="#a9c6e8"/></svg>
<svg class="a" style="left:229.5px;top:467px" width="12" height="12" viewBox="0 0 12 12"><path d="M1 11V4L4 1H6C9 1 11 3 11 6V8L8 11Z" fill="#cfd3d8" stroke="#555" stroke-width="0.7"/><path d="M6 1C9 1 11 3 11 6L8 9C8 6 6.5 4 4 4" fill="#8fa8c4" stroke="#555" stroke-width="0.6"/></svg>
<svg class="a" style="left:245.0px;top:466px" width="13" height="13" viewBox="0 0 13 13"><path d="M1 3L3 1H8V11L6 12.5H1Z" fill="#bcd0e8" stroke="#556" stroke-width="0.6"/><path d="M6 3H8V11L6 12.5Z" fill="#8aa8cc"/><path d="M11 12V2M9.8 3.5L11 1.5L12.2 3.5" fill="none" stroke="#444" stroke-width="0.8"/></svg>
<svg class="a" style="left:260.0px;top:467px" width="12" height="12" viewBox="0 0 12 12"><path d="M1 11V4L4 1H6C9 1 11 3 11 6V8L8 11Z" fill="#cfd3d8" stroke="#555" stroke-width="0.7"/><path d="M6 1C9 1 11 3 11 6L8 9C8 6 6.5 4 4 4" fill="#8fa8c4" stroke="#555" stroke-width="0.6"/></svg>
<svg class="a" style="left:275.0px;top:466px" width="13" height="13" viewBox="0 0 13 13"><path d="M1 3L3 1H8V11L6 12.5H1Z" fill="#bcd0e8" stroke="#556" stroke-width="0.6"/><path d="M6 3H8V11L6 12.5Z" fill="#8aa8cc"/><path d="M11 12V2M9.8 3.5L11 1.5L12.2 3.5" fill="none" stroke="#444" stroke-width="0.8"/></svg>
<svg class="a" style="left:289.9px;top:466px" width="13" height="13" viewBox="0 0 13 13"><rect x="2.8" y="2" width="4.8" height="4.6" fill="#f4f7fc" stroke="#2f5fc0" stroke-width="0.9"/><path d="M3.8 3.6H6.6M3.8 5H6.6" stroke="#7a9ad8" stroke-width="0.5"/><path d="M0.8 11.5L2 7.5H8.5L10 11.5Z" fill="#c8d0da" stroke="#4a5868" stroke-width="0.6"/><path d="M2.5 10L7 8" stroke="#333" stroke-width="0.5"/><path d="M10 8.3L12 10.4L10 12.5L8 10.4Z" fill="#2a7fd8"/></svg>
<svg class="a" style="left:306px;top:467px" width="12" height="12" viewBox="306 467 12 12"><path d="M307 470.3L311.2 468.2L311.6 475.6L307.4 477.6Z" fill="#c4cad0" stroke="#5a626c" stroke-width="0.6"/><path d="M312.6 469.8L316.6 471.8L317 477.8L313 475.8Z" fill="#dde1e5" stroke="#5a626c" stroke-width="0.6"/><path d="M310.8 471.8L313 473.4M312.8 470.8L311 474" stroke="#f08a30" stroke-width="0.9"/></svg>
<svg class="a" style="left:320.5px;top:466px" width="13" height="13" viewBox="0 0 13 13"><rect x="2.8" y="2" width="4.8" height="4.6" fill="#f4f7fc" stroke="#2f5fc0" stroke-width="0.9"/><path d="M3.8 3.6H6.6M3.8 5H6.6" stroke="#7a9ad8" stroke-width="0.5"/><path d="M0.8 11.5L2 7.5H8.5L10 11.5Z" fill="#c8d0da" stroke="#4a5868" stroke-width="0.6"/><path d="M2.5 10L7 8" stroke="#333" stroke-width="0.5"/><path d="M10 8.3L12 10.4L10 12.5L8 10.4Z" fill="#2a7fd8"/></svg>
<svg class="a" style="left:292.5px;top:480px" width="8" height="8" viewBox="0 0 8 8"><rect x="0.5" y="0.5" width="7" height="7" rx="1" fill="#c8ccd2" stroke="#9aa" stroke-width="0.5"/><path d="M4 1.8V6.2M1.8 4H6.2" stroke="#222" stroke-width="1"/></svg>
<svg class="a" style="left:323px;top:480px" width="8" height="8" viewBox="0 0 8 8"><rect x="0.5" y="0.5" width="7" height="7" rx="1" fill="#c8ccd2" stroke="#9aa" stroke-width="0.5"/><path d="M4 1.8V6.2M1.8 4H6.2" stroke="#222" stroke-width="1"/></svg>
<svg class="a" style="left:330.5px;top:463.5px" width="9" height="22" viewBox="0 0 9 22"><path d="M0.5 0.5H8.5V2.5L5.5 6V21H3.5V6L0.5 2.5Z" fill="#6f6f6f"/></svg>
<svg class="a" style="left:850.5px;top:467.5px" width="12" height="12" viewBox="0 0 12 12"><circle cx="6" cy="6" r="3.7" fill="none" stroke="#4a4a4a" stroke-width="2"/><path d="M6 0.8V11.2M0.8 6H11.2M2.3 2.3L9.7 9.7M9.7 2.3L2.3 9.7" stroke="#4a4a4a" stroke-width="1.9" stroke-dasharray="2.1 6.2 2.1 0"/><circle cx="6" cy="6" r="2.3" fill="#f0f0f0"/><circle cx="6" cy="6" r="1" fill="#4a4a4a"/></svg>
<div id="tlbottom" class="a"></div>
<!-- VIEWCUBE -->
<svg class="a" style="left:810px;top:66px" width="50" height="50" viewBox="810 66 50 50">
<defs><linearGradient id="vcg" x1="0" y1="0" x2="0" y2="1"><stop offset="0" stop-color="#959491"/><stop offset="1" stop-color="#8b8a87"/></linearGradient></defs>
<rect x="819" y="79" width="31" height="30" fill="#2a2826" opacity="0.5"/>
<rect x="818.5" y="77.8" width="30.5" height="30" fill="url(#vcg)"/>
<rect x="825" y="84" width="18" height="17.5" fill="#999b9b"/>
<text x="834" y="95.6" font-family="Liberation Sans" font-size="6.6" fill="#6e7178" text-anchor="middle" transform="translate(834 0) scale(0.92 1) translate(-834 0)">FRONT</text>
<text x="819.5" y="76" font-family="Liberation Sans" font-size="7.5" fill="#23a030">Y</text>
<path d="M821.8 75.5V79" stroke="#23a030" stroke-width="1"/>
<path d="M848.5 105H850.5" stroke="#d02020" stroke-width="1"/><text x="851" y="108" font-family="Liberation Sans" font-size="7.5" fill="#d02020">X</text>
<text x="814.5" y="111.5" font-family="Liberation Sans" font-size="7.5" fill="#2030d0">Z</text>
</svg>
<!-- TOOLTIP -->
<div class="a" style="left:470px;top:253px;width:150.5px;height:8.5px;background:#f2f2f2"></div>
<div class="t" style="left:471.5px;top:253.8px;font-size:7px;color:#111;transform:scaleX(0.99);transform-origin:0 0">Adjust alignment and select joint type if needed</div>
<!-- MINI TOOLBAR -->
<div class="a" style="left:400px;top:340px;width:89px;height:14.5px;background:#f0f0f0;border:1px solid #e6e6e6"></div>
<div class="a" style="left:403.5px;top:342px;width:1px;height:11px;border-left:1px dotted #b0b0b0"></div>
<svg class="a" style="left:413.5px;top:342px" width="8" height="11" viewBox="0 0 8 11"><path d="M3.5 0.5V5.5" stroke="#333" stroke-width="0.6"/><path d="M3.5 0.3H7L5.8 1.6L7 3H3.5Z" fill="#1e7ad6"/><circle cx="3.7" cy="7.7" r="2.7" fill="#fff" stroke="#555" stroke-width="0.6"/><circle cx="3.7" cy="7.7" r="1.4" fill="#1e7ad6"/></svg>
<svg class="a" style="left:424.5px;top:346.3px" width="4" height="3" viewBox="0 0 4 3"><path d="M0 0H4L2 2.5Z" fill="#222"/></svg>
<div class="a" style="left:438px;top:342px;width:42px;height:11px;background:#fff;border:1px solid #dedede"></div>
<div class="a" style="left:446px;top:343px;width:26px;height:9px;background:#0a78d7"></div>
<div class="t" style="left:446px;top:344px;font-size:7.8px;color:#fff">1.00 mm</div>
<div class="a" style="left:472px;top:343px;width:7px;height:9px;background:#fff"></div>
<svg class="a" style="left:483.5px;top:346.3px" width="4" height="3" viewBox="0 0 4 3"><path d="M0 0H4L2 2.5Z" fill="#222"/></svg>
<!-- NAVBAR -->
<div class="a" style="left:354px;top:439px;width:161px;height:15.5px;background:#f4f4f4"></div>
<svg class="a" style="left:354px;top:439px" width="161" height="16" viewBox="354 439 161 16">
<defs><linearGradient id="lens" x1="0" y1="0" x2="1" y2="1"><stop offset="0" stop-color="#e8f4f8"/><stop offset="1" stop-color="#a8ccd8"/></linearGradient></defs>
<g fill="none" stroke="#3c3c3c" stroke-width="0.8">
<rect x="359.6" y="441.5" width="2.8" height="10.5" rx="1.4" fill="#c8c8c8"/>
<path d="M358.5 445.5C356 446.3 355.8 448 358 448.8C360 449.5 363 449.6 365 449C367 448.3 366.5 446.6 364 445.8"/>
<path d="M357.8 448V451.2" stroke-width="1"/><path d="M356.7 450.3L357.8 451.8L358.9 450.3" fill="#222"/>
<rect x="377.5" y="445" width="9.5" height="7" rx="0.5" stroke-width="1"/>
<rect x="379.5" y="447" width="5.5" height="3" fill="#c8d0d8" stroke-width="0.7"/>
<path d="M380 444L381.5 442.2M384.5 444L383 442.2" stroke-width="0.7"/>
<g stroke-width="0.65" fill="#f6f6f6" stroke="#3c3c3c"><rect x="395.3" y="442.6" width="1.5" height="6" rx="0.75"/><rect x="396.8" y="441.6" width="1.5" height="6.5" rx="0.75"/><rect x="398.3" y="442" width="1.5" height="6.5" rx="0.75"/><rect x="399.8" y="443.2" width="1.5" height="5.5" rx="0.75"/><path d="M395.3 447.5L394.2 446.6C393.5 446 392.7 446.6 393.2 447.5L395 450.5C395.8 451.8 396.5 452.4 397.8 452.4H398.8C400.3 452.4 401.3 451.2 401.3 449.5V447H395.3Z"/></g>
<circle cx="413.5" cy="446" r="3.3" fill="url(#lens)" stroke-width="0.9"/>
<path d="M415.8 448.4L418.8 451.4" stroke-width="1.8" stroke="#2a2a2a"/>
<path d="M418.5 441.5V445M416.8 443.2H420.2" stroke-width="0.8"/>
<circle cx="430.5" cy="446" r="3.6" fill="url(#lens)" stroke-width="0.9"/>
<path d="M433 448.6L436.2 451.8" stroke-width="1.8" stroke="#2a2a2a"/>
<path d="M426 441.5V451.5H436V441.5" stroke-width="0.5" stroke-dasharray="0.8 0.8" stroke="#888"/>
</g>
<g fill="#222"><path d="M370 446H374L372 448.2Z"/><path d="M440.5 446H444.5L442.5 448.2Z"/><path d="M465 446H469L467 448.2Z"/><path d="M485 446H489L487 448.2Z"/><path d="M505 446H509L507 448.2Z"/></g>
<rect x="453.5" y="442" width="9.5" height="7" fill="#6a8cc0" stroke="#555" stroke-width="0.8"/><rect x="454.8" y="443.3" width="6.9" height="4.4" fill="#a8c8ee"/>
<path d="M456 451.5H460.5M458.2 449V451.5" stroke="#666" stroke-width="1"/>
<rect x="472.5" y="442" width="10" height="10" fill="#e4e4e4" stroke="#777" stroke-width="0.6"/>
<path d="M474.5 442V452M476.5 442V452M478.5 442V452M480.5 442V452M472.5 444.5H482.5M472.5 447H482.5M472.5 449.5H482.5" stroke="#8a8e94" stroke-width="0.5"/>
<rect x="492.3" y="442.3" width="9.5" height="9" rx="0.8" fill="#8ab0e0" stroke="#4a6a9a" stroke-width="0.7"/>
<path d="M492.3 446.8H501.8M497 442.3V451.3" stroke="#e8f0fa" stroke-width="0.9"/>
</svg>

<div id="dialog" class="a"></div>
<div class="a" style="left:709px;top:183px;width:158px;height:1px;background:#dcdcdc"></div>
<div class="a" style="left:709.5px;top:171px;width:2px;height:8px;background:#c8c8c8;border-left:1px solid #999"></div>
<svg class="a" style="left:716px;top:172px" width="6" height="6" viewBox="0 0 6 6"><circle cx="3" cy="3" r="2.9" fill="#333"/><path d="M1.3 3H4.7" stroke="#fff" stroke-width="0.9"/></svg>
<div class="t" style="left:724px;top:172px;font-size:6.8px;color:#666;transform:scaleX(0.92);transform-origin:0 0">JOINT</div>
<svg class="a" style="left:858px;top:173px" width="6" height="5" viewBox="0 0 6 5"><path d="M0 0L3 2.5L0 5ZM3 0L6 2.5L3 5Z" fill="#222"/></svg>
<div class="a" style="left:862px;top:184px;width:3px;height:247px;background:#b8b8b8;border-radius:1px"></div>
<svg class="a" style="left:712px;top:190px" width="6" height="5" viewBox="0 0 6 5"><path d="M0 0H6L3 4.5Z" fill="#333"/></svg>
<div class="t dh" style="left:720px;top:189px">Components</div>
<div class="t dl" style="left:716.5px;top:208.8px;transform:scaleX(0.93)">Component1</div>
<div class="a" style="left:763px;top:203px;width:50px;height:17px;background:#fff;border:1px solid #dedede"></div>
<svg class="a" style="left:767px;top:206px" width="7" height="11" viewBox="0 0 7 11"><path d="M0.5 0.5V9L2.5 7.2L4 10.5L5.2 10L3.8 6.8H6.5Z" fill="#fff" stroke="#555" stroke-width="0.7"/></svg>
<div class="t dt" style="left:777.5px;top:209.3px">1 selected</div>
<svg class="a" style="left:820px;top:209px" width="6" height="6" viewBox="0 0 6 6"><path d="M0.5 0.5L5.5 5.5M5.5 0.5L0.5 5.5" stroke="#444" stroke-width="1.1"/></svg>
<div class="t dl" style="left:716.5px;top:227.8px;transform:scaleX(0.93)">Component2</div>
<div class="a" style="left:763px;top:223px;width:50px;height:17px;background:#fff;border:1px solid #dedede"></div>
<svg class="a" style="left:767px;top:226px" width="7" height="11" viewBox="0 0 7 11"><path d="M0.5 0.5V9L2.5 7.2L4 10.5L5.2 10L3.8 6.8H6.5Z" fill="#fff" stroke="#555" stroke-width="0.7"/></svg>
<div class="t dt" style="left:777.5px;top:228.3px">1 selected</div>
<svg class="a" style="left:820px;top:228px" width="6" height="6" viewBox="0 0 6 6"><path d="M0.5 0.5L5.5 5.5M5.5 0.5L0.5 5.5" stroke="#444" stroke-width="1.1"/></svg>
<svg class="a" style="left:712px;top:248px" width="6" height="5" viewBox="0 0 6 5"><path d="M0 0H6L3 4.5Z" fill="#333"/></svg>
<div class="t dh" style="left:720px;top:246.5px">Alignment</div>
<div class="t dl" style="left:716.5px;top:266.5px">Angle</div>
<div class="a" style="left:767px;top:262.5px;width:83px;height:13.5px;background:#fff;border:1px solid #d6d6d6"></div><div class="t dt" style="left:769.5px;top:266.0px">0.0 deg</div><svg class="a" style="left:851px;top:268.25px" width="5" height="3" viewBox="0 0 5 3"><path d="M0 0H5L2.5 3Z" fill="#222"/></svg>
<div class="t dl" style="left:716.5px;top:285.5px">Offset X</div>
<div class="a" style="left:767px;top:281.5px;width:83px;height:13.5px;background:#fff;border:1px solid #d6d6d6"></div><div class="t dt" style="left:769.5px;top:285.0px">1.00 mm</div><svg class="a" style="left:851px;top:287.25px" width="5" height="3" viewBox="0 0 5 3"><path d="M0 0H5L2.5 3Z" fill="#222"/></svg>
<div class="t dl" style="left:716.5px;top:304.5px">Offset Y</div>
<div class="a" style="left:767px;top:300.5px;width:83px;height:13.5px;background:#fff;border:1px solid #d6d6d6"></div><div class="t dt" style="left:769.5px;top:304.0px">0.00 mm</div><svg class="a" style="left:851px;top:306.25px" width="5" height="3" viewBox="0 0 5 3"><path d="M0 0H5L2.5 3Z" fill="#222"/></svg>
<div class="t dl" style="left:716.5px;top:323.5px">Offset Z</div>
<div class="a" style="left:767px;top:319.5px;width:83px;height:13.5px;background:#fff;border:1px solid #d6d6d6"></div><div class="t dt" style="left:769.5px;top:323.0px">0.00 mm</div><svg class="a" style="left:851px;top:325.25px" width="5" height="3" viewBox="0 0 5 3"><path d="M0 0H5L2.5 3Z" fill="#222"/></svg>
<div class="t dl" style="left:716.5px;top:343.0px">Flip</div>
<div class="a" style="left:763px;top:337px;width:15px;height:17px;background:#1a97dc"></div>
<svg class="a" style="left:760px;top:334px" width="22" height="22" viewBox="760 334 22 22"><path d="M769 342.2L775 348.2" stroke="#c03070" stroke-width="0.7" stroke-dasharray="0.9 0.7"/><path d="M767 349.5L768.2 346.2L770.3 348.3Z" fill="#111"/><circle cx="769.8" cy="346.6" r="1.3" fill="#111"/><path d="M774.8 342L771.6 343.1L773.7 345.2Z" fill="#111"/><circle cx="772.6" cy="344" r="0.9" fill="#111"/></svg>
<svg class="a" style="left:712px;top:363px" width="6" height="5" viewBox="0 0 6 5"><path d="M0 0H6L3 4.5Z" fill="#333"/></svg>
<div class="t dh" style="left:720px;top:361.5px">Motion</div>
<div class="t dl" style="left:716.5px;top:381.5px">Type</div>
<div class="a" style="left:763px;top:375.5px;width:95px;height:17px;background:#fff;border:1px solid #dedede"></div>
<svg class="a" style="left:766px;top:377px" width="8" height="12" viewBox="0 0 8 12"><path d="M3.5 0.5V6" stroke="#333" stroke-width="0.6"/><path d="M3.5 0.5H7L5.8 1.8L7 3.2H3.5Z" fill="#1e7ad6"/><circle cx="3.8" cy="8.5" r="2.8" fill="#fff" stroke="#555" stroke-width="0.6"/><circle cx="3.8" cy="8.5" r="1.5" fill="#1e7ad6"/></svg>
<div class="t dt" style="left:778px;top:380.5px">Revolute</div>
<svg class="a" style="left:851px;top:383px" width="5" height="3" viewBox="0 0 5 3"><path d="M0 0H5L2.5 3Z" fill="#222"/></svg>
<div class="t dl" style="left:716.5px;top:400.5px">Rotate</div>
<div class="a" style="left:763px;top:394.5px;width:95px;height:17px;background:#fff;border:1px solid #dedede"></div>
<svg class="a" style="left:765px;top:397px" width="12" height="11" viewBox="0 0 12 11"><ellipse cx="5.5" cy="6" rx="4.5" ry="3.5" fill="none" stroke="#444" stroke-width="0.9"/><path d="M2 2L10 10M10 2L2 10" stroke="#d42a2a" stroke-width="1"/><path d="M4 1L7 3" stroke="#444" stroke-width="0.8"/></svg>
<div class="t dt" style="left:778px;top:399.5px">Z Axis</div>
<svg class="a" style="left:851px;top:402px" width="5" height="3" viewBox="0 0 5 3"><path d="M0 0H5L2.5 3Z" fill="#222"/></svg>
<div class="t dl" style="left:716.5px;top:419.5px">Animate</div>
<svg class="a" style="left:768px;top:419px" width="6" height="6" viewBox="0 0 6 6"><path d="M0 0L6 3L0 6Z" fill="#111"/></svg>
<div class="a" style="left:709px;top:431px;width:158px;height:1px;background:#d4d4d4"></div>
<svg class="a" style="left:714px;top:439px" width="8" height="8" viewBox="0 0 8 8"><circle cx="4" cy="4" r="3.8" fill="#111"/><rect x="3.4" y="3.2" width="1.2" height="3.2" fill="#fff"/><circle cx="4" cy="2" r="0.7" fill="#fff"/></svg>
<div class="a" style="left:777px;top:437.5px;width:38px;height:11.5px;background:#e8e8e8;border:1px solid #cdcdcd"></div>
<div class="t" style="left:777px;top:439.5px;width:38px;text-align:center;font-size:8px;color:#8a8a8a">OK</div>
<div class="a" style="left:821.5px;top:437.5px;width:38px;height:11.5px;background:#e8e8e8;border:1px solid #cdcdcd"></div>
<div class="t" style="left:821.5px;top:439.5px;width:38px;text-align:center;font-size:7.8px;color:#6a6a6a">Cancel</div>
</body></html>
